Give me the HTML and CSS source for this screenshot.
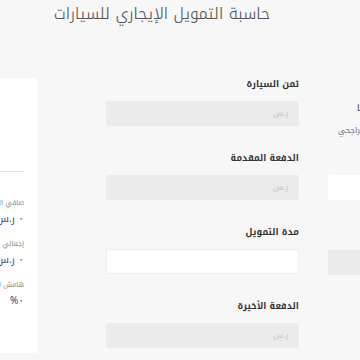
FILE: index.html
```html
<!DOCTYPE html>
<html lang="ar" dir="rtl">
<head>
    <meta charset="UTF-8">
    <meta name="viewport" content="width=device-width, initial-scale=1.0">
    <title>حاسبة التمويل الإيجاري للسيارات</title>
    <link rel="stylesheet" href="styles.css">
</head>
<body>
    <div class="page">
        <h1>حاسبة التمويل الإيجاري للسيارات</h1>

        <div class="calc">
            <div class="side">
                <p class="side-title">المزايا</p>
                <p class="side-note">التمويل مع مصرف الراجحي</p>
                <div class="side-box white"></div>
                <div class="side-box"></div>
            </div>

            <form class="calc-form">
                <div class="field">
                    <label>ثمن السيارة</label>
                    <input type="text" placeholder="ر.س">
                </div>
                <div class="field">
                    <label>الدفعة المقدمة</label>
                    <input type="text" placeholder="ر.س">
                </div>
                <div class="field">
                    <label>مدة التمويل</label>
                    <input type="text" class="light">
                </div>
                <div class="field">
                    <label>الدفعة الأخيرة</label>
                    <input type="text" placeholder="ر.س">
                </div>
            </form>

            <div class="results">
                <div class="results-top"></div>
                <div class="result">
                    <span class="result-label">صافي القسط الشهري</span>
                    <span class="result-value">٠ ر.س</span>
                </div>
                <div class="result">
                    <span class="result-label">إجمالي المبلغ المستحق</span>
                    <span class="result-value">٠ ر.س</span>
                </div>
                <div class="result">
                    <span class="result-label">هامش الربح</span>
                    <span class="result-value">٠%</span>
                </div>
            </div>
        </div>
    </div>
</body>
</html>
```

FILE: styles.css
```css
body {
    margin: 0;
    background-color: #f7f7f7;
    font-family: "Noto Kufi Arabic", "Noto Sans Arabic", "DejaVu Sans", sans-serif;
    overflow: hidden;
    height: 360px;
}
.page {
    direction: rtl;
}
h1 {
    margin: 0 36px 0 0;
    width: 324px;
    padding-top: 0;
    height: 78px;
    font-size: 16px;
    font-weight: 300;
    color: #555;
    text-align: center;
    line-height: 28px;
}
.calc {
    display: grid;
    grid-template-columns: 120px 193px 190px;
    column-gap: 29px;
    margin-right: -88px;
    margin-left: -113px;
}
.calc-form {
    margin: 0;
}
.field {
    margin-bottom: 26px;
}
.field label {
    display: block;
    font-size: 9px;
    font-weight: bold;
    color: #333;
    line-height: 12px;
    margin-bottom: 11px;
}
.field input {
    display: block;
    box-sizing: border-box;
    width: 100%;
    height: 25px;
    border: none;
    border-radius: 2px;
    background-color: #ebebeb;
    padding: 0 11px;
    font-family: inherit;
    font-size: 8px;
}
.field input::placeholder {
    color: #c2c2c2;
}
.field input.light {
    background-color: #fff;
    border: 1px solid #eee;
}
.side {
    padding-top: 24px;
}
.side p {
    margin: 0;
    text-align: left;
    white-space: nowrap;
}
.side-title {
    font-size: 9px;
    color: #444;
    line-height: 12px;
    padding-left: 29px;
}
.side-note {
    font-size: 8px;
    color: #666;
    line-height: 12px;
    margin-top: 11px !important;
    padding-left: 10px;
}
.side-box {
    height: 25px;
    background-color: #ebebeb;
    border-radius: 2px;
}
.side-box.white {
    background-color: #fff;
    margin-top: 38px;
    margin-bottom: 50px;
}
.results {
    background-color: #fff;
    margin-right: 40px;
    padding: 0 13px 0 0;
    height: 275px;
    box-sizing: border-box;
}
.results-top {
    height: 93px;
    border-bottom: 1px solid #e6e6e6;
    margin-bottom: 24px;
}
.result {
    display: flex;
    flex-direction: column;
    align-items: flex-start;
    margin-bottom: 10px;
    white-space: nowrap;
}
.result-label {
    font-size: 7px;
    color: #888;
    line-height: 14px;
}
.result-value {
    font-size: 10px;
    color: #363c78;
    line-height: 17px;
}
```
